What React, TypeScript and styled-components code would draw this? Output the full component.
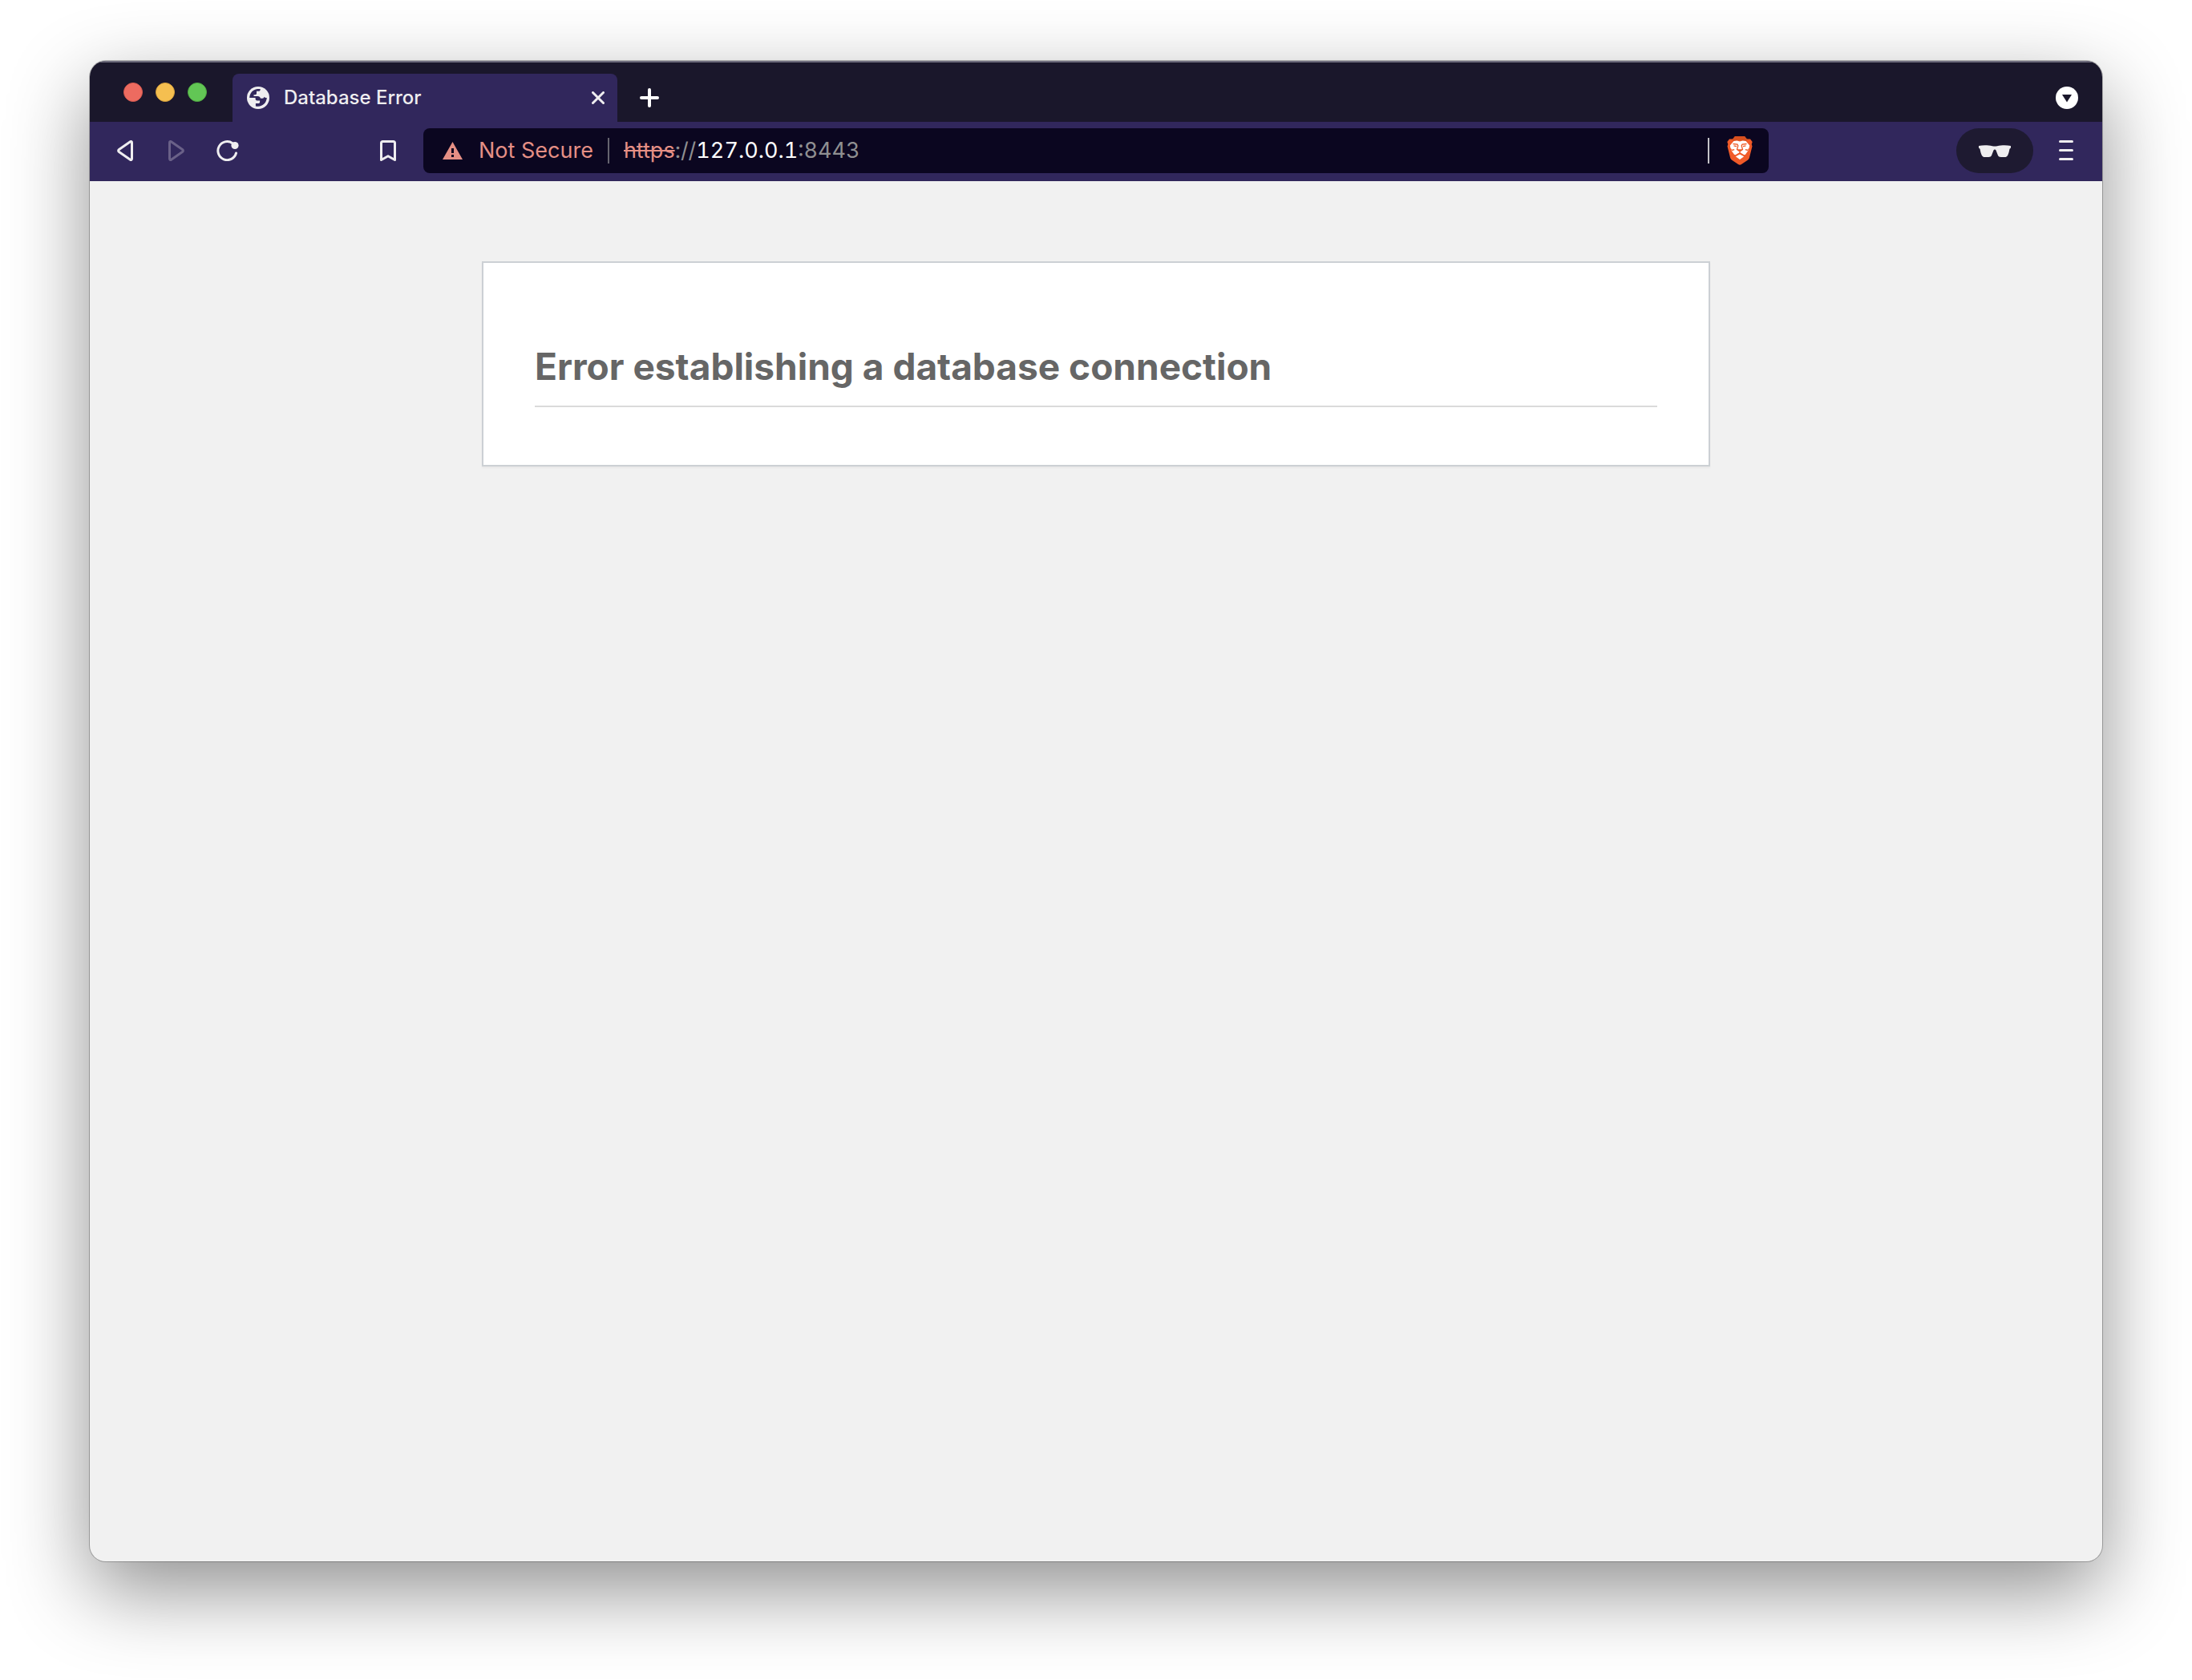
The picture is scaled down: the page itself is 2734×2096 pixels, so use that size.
import React from "react";
import styled, { createGlobalStyle } from "styled-components";

const color = {
  strip: "#1a172b",
  toolbar: "#31275c",
  address: "#0b0620",
  icon: "#efeef0",
  danger: "#e58f85",
  muted: "#8f8f91",
};

const GlobalStyle = createGlobalStyle`
  * { box-sizing: border-box; }
  body {
    margin: 0;
    background: #fff;
    font-family: Inter, "Liberation Sans", sans-serif;
  }
  button {
    padding: 0;
    border: 0;
    background: none;
    color: inherit;
    font: inherit;
    cursor: pointer;
  }
  svg { display: block; }
`;

const Desktop = styled.div`
  display: flex;
  min-height: 100vh;
  padding: 76px 112px 148px;
`;

const BrowserWindow = styled.div`
  display: flex;
  flex: 1;
  flex-direction: column;
  min-width: 0;
  overflow: hidden;
  border-radius: 20px;
  background: #f1f1f1;
  box-shadow:
    0 0 0 1px rgba(0, 0, 0, 0.25),
    0 36px 100px rgba(0, 0, 0, 0.44);
`;

const TabStrip = styled.header`
  display: flex;
  align-items: flex-end;
  height: 76px;
  padding: 0 30px 0 42px;
  border-top: 2px solid #6d6b7c;
  background: ${color.strip};
  color: #fff;
`;

const WindowControls = styled.div`
  display: flex;
  gap: 16px;
  height: 60px;
  padding-top: 11px;
  margin-right: 32px;
`;

const WindowControl = styled.button<{ $fill: string; $edge: string }>`
  width: 24px;
  height: 24px;
  border: 1px solid ${(p) => p.$edge};
  border-radius: 50%;
  background: ${(p) => p.$fill};
`;

const Tab = styled.div`
  display: flex;
  align-items: center;
  width: 480px;
  height: 60px;
  padding: 0 16px 0 18px;
  border-radius: 8px 8px 0 0;
  background: ${color.toolbar};
  color: ${color.icon};
`;

const TabTitle = styled.span`
  flex: 1;
  margin-left: 18px;
  font-size: 24px;
  font-weight: 500;
  line-height: 32px;
  white-space: nowrap;
`;

const StripButton = styled.button`
  display: flex;
  align-items: center;
  height: 60px;
  margin-left: 28px;
`;

const SearchTabsButton = styled(StripButton)`
  margin-left: auto;
`;

const Toolbar = styled.div`
  display: flex;
  align-items: center;
  height: 74px;
  padding: 8px 36px 10px 30px;
  background: ${color.toolbar};
  color: ${color.icon};
`;

const NavButtons = styled.nav`
  display: grid;
  grid-template-columns: repeat(3, 28px);
  gap: 36px;
`;

const IconButton = styled.button`
  display: flex;
  align-items: center;
  justify-content: center;
  height: 56px;

  &:disabled {
    color: #6a6188;
    cursor: default;
  }
`;

const BookmarkButton = styled(IconButton)`
  margin: 0 34px 0 176px;
`;

const AddressBar = styled.div`
  display: flex;
  flex: 1;
  align-items: center;
  min-width: 0;
  height: 56px;
  padding: 0 20px 0 24px;
  border-radius: 8px;
  background: ${color.address};
  font-size: 27px;
  line-height: 36px;
`;

const SecurityButton = styled.button`
  display: flex;
  align-items: center;
  gap: 20px;
  margin-right: 18px;
  color: ${color.danger};
  white-space: nowrap;
`;

const Divider = styled.span<{ $tone: string }>`
  width: 2px;
  height: 32px;
  background: ${(p) => p.$tone};
`;

const Url = styled.div`
  flex: 1;
  min-width: 0;
  margin-left: 18px;
  overflow: hidden;
  color: ${color.muted};
  font-variant-numeric: tabular-nums;
  white-space: nowrap;
  outline: none;
`;

const Scheme = styled.s`
  color: ${color.danger};
  text-decoration-thickness: 2px;
`;

const Host = styled.span`
  color: #fff;
`;

const ShieldButton = styled(IconButton)`
  margin-left: 22px;
`;

const ProfileButton = styled(IconButton)`
  width: 96px;
  margin: 0 32px 0 234px;
  border-radius: 28px;
  background: #1e1a31;
`;

const Page = styled.main`
  flex: 1;
  padding: 100px 64px;
`;

const ErrorCard = styled.section`
  max-width: 1532px;
  margin: 0 auto;
  padding: 93px 64px 72px;
  border: 2px solid #ccd0d4;
  background: #fff;
  box-shadow: 0 2px 2px rgba(0, 0, 0, 0.04);
`;

const ErrorTitle = styled.h1`
  margin: 0;
  padding-bottom: 13px;
  border-bottom: 2px solid #dadada;
  color: #666;
  font-size: 46px;
  font-weight: 700;
  line-height: 72px;
`;

const windowControls = [
  { label: "Close", fill: "#ed6b60", edge: "#d95a50" },
  { label: "Minimize", fill: "#f5bf50", edge: "#d9a23c" },
  { label: "Zoom", fill: "#62c655", edge: "#50aa42" },
];

const GlobeIcon = () => (
  <svg width="28" height="28" viewBox="0 0 28 28" aria-hidden="true">
    <circle cx="14" cy="14" r="14" fill="currentColor" />
    <path
      fill={color.toolbar}
      d="M3.2 14C3.4 8.200 7.400 3.700 13 3c1.500-.2 2.600-.1 3.600.1v.9c0 1-.8 1.800-1.800 1.800h-2.800v2.700c0 .9-.8 1.700-1.700 1.700H8.500v1.700h4.800c2 0 3.300 1 3.700 2.900h2.500c1 0 1.800-.7 1.800-1.700v-.4c.7.700 1.900 1.300 3.500 1.300-.3 5.700-4.700 10.700-11 10.800-1.300 0-2-.1-2.900-.3V21h3.400c1 0 1.800-.8 1.800-1.800v-1.700h-3.600c-1 0-1.900-.9-1.900-1.900V14z"
    />
  </svg>
);

const CloseIcon = () => (
  <svg width="16" height="16" viewBox="0 0 16 16" aria-hidden="true">
    <path d="M1.500 1.500l13 13M14.500 1.500l-13 13" stroke="currentColor" strokeWidth="3" strokeLinecap="round" />
  </svg>
);

const PlusIcon = () => (
  <svg width="24" height="24" viewBox="0 0 24 24" aria-hidden="true">
    <path d="M12 2v20M2 12h20" stroke="currentColor" strokeWidth="4" strokeLinecap="round" />
  </svg>
);

const SearchTabsIcon = () => (
  <svg width="28" height="28" viewBox="0 0 28 28" aria-hidden="true">
    <circle cx="14" cy="14" r="14" fill="#fff" />
    <path d="M8 10h12l-6 9.500z" fill={color.strip} />
  </svg>
);

const TriangleIcon = ({ flipped = false }: { flipped?: boolean }) => (
  <svg width="20" height="26" viewBox="0 0 20 26" aria-hidden="true">
    <path
      d={
        flipped
          ? "M1.500 3v20c0 1.300 1 1.900 2 1.200l14-9.700c1.200-.9 1.200-2.100 0-3L3.500 1.800c-1-.7-2-.1-2 1.200z"
          : "M18.500 3v20c0 1.300-1 1.900-2 1.200l-14-9.700c-1.200-.9-1.200-2.100 0-3l14-9.700c1-.7 2-.1 2 1.200z"
      }
      fill="none"
      stroke="currentColor"
      strokeWidth="3"
      strokeLinejoin="round"
    />
  </svg>
);

const ReloadIcon = () => (
  <svg width="28" height="26" viewBox="0 0 28 26" aria-hidden="true">
    <path
      d="M20 3.700A11.500 11.500 0 1 0 24.500 16"
      fill="none"
      stroke="currentColor"
      strokeWidth="3"
      strokeLinecap="round"
    />
    <circle cx="23" cy="6.500" r="4.600" fill="currentColor" />
  </svg>
);

const BookmarkIcon = () => (
  <svg width="20" height="26" viewBox="0 0 20 26" aria-hidden="true">
    <path
      d="M3.500 1.500h13c1.100 0 2 .9 2 2v21L10 19.800 1.500 24.500v-21c0-1.100.9-2 2-2z"
      fill="none"
      stroke="currentColor"
      strokeWidth="3"
      strokeLinejoin="round"
    />
  </svg>
);

const WarningIcon = () => (
  <svg width="25" height="22" viewBox="0 0 25 22" aria-hidden="true">
    <path
      fill="currentColor"
      fillRule="evenodd"
      d="M12.500 0L25 22H0zM11 8v6h3V8zM11 16v3h3v-3z"
    />
  </svg>
);

const LionIcon = () => (
  <svg width="32" height="36" viewBox="0 0 32 36" aria-hidden="true">
    <path
      fill="#f05a28"
      d="M7 3.500L3 3.500.3 7l1 3L.5 12.500 4 26.500c.4 1.400 1 2.300 2.200 3.200L14 35c1.400 1 2.600 1 4 0l7.800-5.300c1.200-.9 1.800-1.800 2.200-3.200l3.500-14-.8-2.500 1-3L29 3.500h-4z"
    />
    <path fill="#d8501f" d="M9.800 0h12.400L25 3.500l1 .5-2 2-8-.6L8 6 6 4l1-.5z" />
    <path
      fill="#fff"
      d="M8.500 6l4-.5 3.500.9 3.500-.9 4 .5 4.700 5.500-.7 3.500-1.300 1 .3 1.800-3.500 5-1.500.4L16 20l-5.500 3.200-1.500-.4-3.500-5 .3-1.800-1.300-1-.7-3.500zM16 22.500l5.200 2.700L16 29l-5.200-3.800z"
    />
    <path
      d="M7.500 9.500l5.500.6.800 1.800-1.300 4.600 3.500 2.500 3.500-2.500-1.300-4.600.8-1.800 5.500-.6M8.500 11.800l3.500.9M23.500 11.800l-3.500.9M16 19v2.200M5.800 17.500l3.400-.9M26.200 17.500l-3.400-.9"
      fill="none"
      stroke="#ee5a26"
      strokeWidth="1.300"
    />
    <path d="M12.300 16.200h7.400L16 19.400z" fill="#ee5a26" />
  </svg>
);

const GlassesIcon = () => (
  <svg width="40" height="15" viewBox="0 0 40 15" aria-hidden="true">
    <path
      fill="currentColor"
      d="M0 1C5-.2 12 0 17 1.200c2 .5 4 .5 6 0C28 0 35-.2 40 1v2.500l-1.500 1.200c-.6 3.300-1.200 6-2.300 8-.9 1.600-2 2.300-4 2.300h-4.400c-2 0-3.200-.7-4-2.500l-2.300-6c-.5-1.400-2.500-1.400-3 0l-2.300 6c-.8 1.800-2 2.500-4 2.500H7.800c-2 0-3.100-.7-4-2.300-1.100-2-1.700-4.700-2.300-8L0 3.500z"
    />
  </svg>
);

const MenuIcon = () => (
  <svg width="18" height="26" viewBox="0 0 18 26" aria-hidden="true">
    <path
      d="M1.500 1.500h15M1.500 12.500h15M1.500 23.500h15"
      stroke="currentColor"
      strokeWidth="3"
      strokeLinecap="round"
    />
  </svg>
);

export default function App() {
  return (
    <>
      <GlobalStyle />
      <Desktop>
        <BrowserWindow>
          <TabStrip>
            <WindowControls>
              {windowControls.map((control) => (
                <WindowControl
                  key={control.label}
                  type="button"
                  aria-label={control.label}
                  $fill={control.fill}
                  $edge={control.edge}
                />
              ))}
            </WindowControls>
            <Tab>
              <GlobeIcon />
              <TabTitle>Database Error</TabTitle>
              <button type="button" aria-label="Close tab">
                <CloseIcon />
              </button>
            </Tab>
            <StripButton type="button" aria-label="New tab">
              <PlusIcon />
            </StripButton>
            <SearchTabsButton type="button" aria-label="Search tabs">
              <SearchTabsIcon />
            </SearchTabsButton>
          </TabStrip>

          <Toolbar>
            <NavButtons aria-label="History">
              <IconButton type="button" aria-label="Back">
                <TriangleIcon />
              </IconButton>
              <IconButton type="button" aria-label="Forward" disabled>
                <TriangleIcon flipped />
              </IconButton>
              <IconButton type="button" aria-label="Reload">
                <ReloadIcon />
              </IconButton>
            </NavButtons>
            <BookmarkButton type="button" aria-label="Bookmark this page">
              <BookmarkIcon />
            </BookmarkButton>
            <AddressBar>
              <SecurityButton type="button">
                <WarningIcon />
                Not Secure
              </SecurityButton>
              <Divider $tone="#66646f" />
              <Url role="textbox" tabIndex={0} aria-label="Address">
                <Scheme>https</Scheme>://<Host>127.0.0.1</Host>:8443
              </Url>
              <Divider $tone="#c4c3c8" />
              <ShieldButton type="button" aria-label="Shields">
                <LionIcon />
              </ShieldButton>
            </AddressBar>
            <ProfileButton type="button" aria-label="Private window">
              <GlassesIcon />
            </ProfileButton>
            <IconButton type="button" aria-label="Menu">
              <MenuIcon />
            </IconButton>
          </Toolbar>

          <Page>
            <ErrorCard>
              <ErrorTitle>Error establishing a database connection</ErrorTitle>
            </ErrorCard>
          </Page>
        </BrowserWindow>
      </Desktop>
    </>
  );
}
